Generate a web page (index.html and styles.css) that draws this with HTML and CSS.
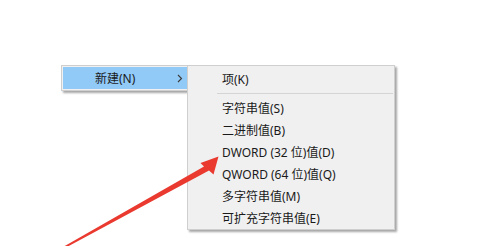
FILE: index.html
```html
<!DOCTYPE html>
<html lang="zh-CN">
<head>
<meta charset="utf-8">
<link rel="stylesheet" href="styles.css">
</head>
<body>
<div class="canvas">
  <div class="menu main-menu">
    <div class="item active">
      <span class="label">新建(N)</span>
      <svg class="chev" width="6" height="9" viewBox="0 0 6 9"><path d="M1 1 L4.5 4.5 L1 8" fill="none" stroke="#3a3a3a" stroke-width="1.1"/></svg>
    </div>
  </div>
  <div class="menu sub-menu">
    <div class="item">项(K)</div>
    <div class="sep"></div>
    <div class="item">字符串值(S)</div>
    <div class="item">二进制值(B)</div>
    <div class="item">DWORD (32 位)值(D)</div>
    <div class="item">QWORD (64 位)值(Q)</div>
    <div class="item">多字符串值(M)</div>
    <div class="item">可扩充字符串值(E)</div>
  </div>
  <svg class="arrow" width="504" height="246" viewBox="0 0 504 246">
    <polygon points="63,247 204,166.5 200.5,163 218.5,156.5 213.5,174.5 209,170.5 66,247.5" fill="#ea3a30"/>
  </svg>
</div>
</body>
</html>
```
FILE: styles.css
```css
html, body {
  margin: 0;
  padding: 0;
  background: #ffffff;
}
.canvas {
  position: relative;
  width: 504px;
  height: 246px;
  overflow: hidden;
  font-family: "Noto Sans", "Noto Sans CJK SC", sans-serif;
  font-size: 12px;
  color: #1a1a1a;
}
.menu {
  position: absolute;
  background: #f0f0f0;
  border: 1px solid #cfcfcf;
  box-shadow: 2px 2px 2px rgba(0, 0, 0, 0.35);
  box-sizing: border-box;
}
.main-menu {
  left: 61px;
  top: 65px;
  width: 132px;
  padding: 1px;
}
.main-menu .item {
  display: flex;
  align-items: center;
  justify-content: space-between;
  height: 22px;
  padding: 0 8px 0 32px;
  background: #91c9f7;
}
.chev {
  display: block;
  margin-top: 1px;
}
.sub-menu {
  left: 187px;
  top: 65px;
  width: 208px;
  height: 165px;
  padding-top: 2px;
  z-index: 1;
}
.sub-menu .item {
  height: 22px;
  line-height: 24px;
  padding-left: 34px;
  white-space: nowrap;
  overflow: hidden;
}
.sep {
  height: 7px;
  margin-left: 29px;
  position: relative;
}
.sep::after {
  content: "";
  position: absolute;
  left: 0;
  right: 1px;
  top: 3px;
  height: 1px;
  background: #d4d4d4;
}
.arrow {
  position: absolute;
  left: 0;
  top: 0;
  z-index: 2;
  pointer-events: none;
}
```
